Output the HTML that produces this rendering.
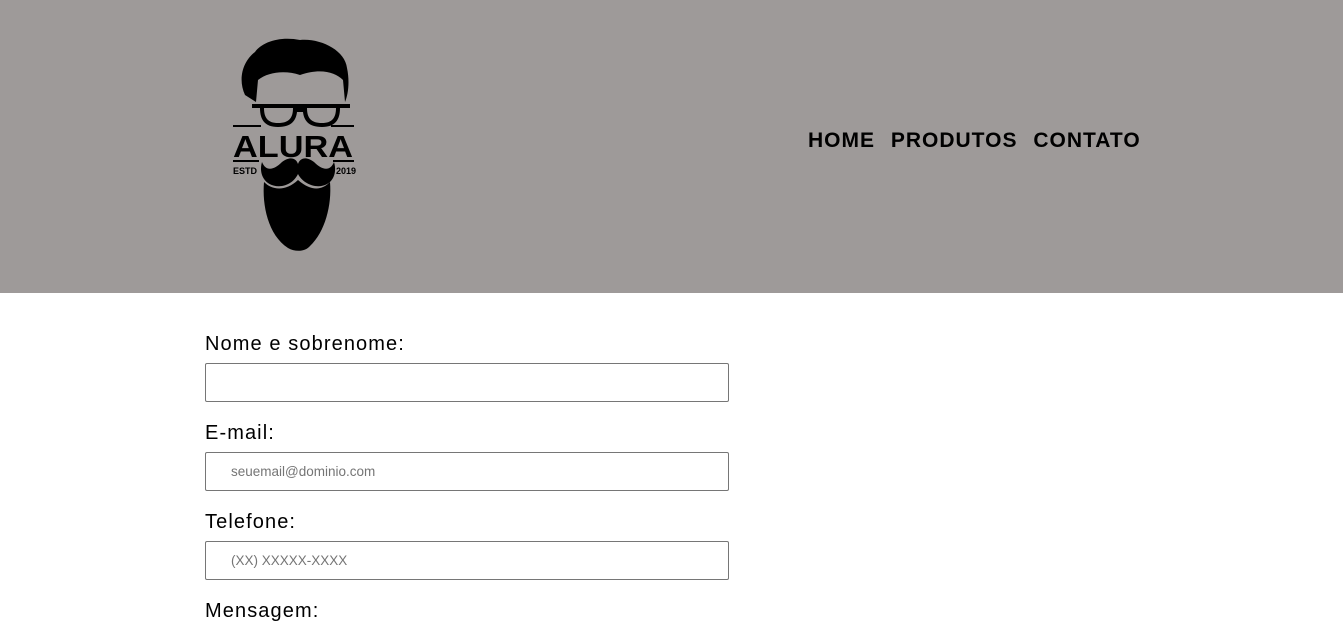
<!DOCTYPE html>
<html><head><style>
body{margin:0;font-family:"Liberation Sans",sans-serif;background:#fff;width:1343px;height:624px;overflow:hidden}
header{position:absolute;left:0;top:0;width:1343px;height:293px;background:#9e9a99}
nav{position:absolute;left:808px;top:129px;font-weight:bold;font-size:21px;letter-spacing:1px;color:#000;white-space:nowrap}
nav span{margin-right:9px}
label{position:absolute;left:205px;font-size:20px;color:#000;letter-spacing:1.1px}
.in{position:absolute;left:205px;width:522px;height:37px;border:1px solid #767676;border-radius:2px;font-size:13.5px;color:#757575;line-height:37px;box-sizing:content-box}
.in span{margin-left:25px}
</style></head><body>
<header>
<svg style="position:absolute;left:230px;top:36px" width="130" height="220" viewBox="230 36 130 220">
<path d="M245 95 C238 80 242 62 255 52 C262 42 280 36 300 40 C320 38 345 50 347 68 C350 82 348 95 345 102 L343 80 C335 72 320 68 300 75 C285 70 268 72 258 80 L256 102 Z" fill="#000"/>
<path d="M252 104 L350 104 L350 108 L340 108 C340 120 335 127 322 127 C308 127 304 120 303 112 L297 112 C296 120 292 127 278 127 C265 127 260 120 260 108 L252 108 Z M264 108 C264 118 268 123 278 123 C289 123 293 118 293 108 Z M307 108 C307 118 311 123 322 123 C332 123 336 118 336 108 Z" fill="#000"/>
<rect x="233" y="125" width="28" height="2" fill="#000"/><rect x="331" y="125" width="23" height="2" fill="#000"/>
<text x="293" y="157" text-anchor="middle" font-family="Liberation Sans" font-weight="bold" font-size="31" textLength="120" lengthAdjust="spacingAndGlyphs">ALURA</text>
<rect x="233" y="160" width="26" height="2" fill="#000"/><rect x="333" y="160" width="21" height="2" fill="#000"/>
<text x="233" y="174" font-family="Liberation Sans" font-size="9" font-weight="bold">ESTD</text>
<text x="336" y="174" font-family="Liberation Sans" font-size="9" font-weight="bold">2019</text>
<path d="M262 162 C258 175 266 188 282 186 C292 184 296 178 298 174 C300 178 305 184 315 186 C331 188 338 175 334 162 C330 172 322 170 314 162 C306 156 300 158 298 164 C296 158 290 156 282 162 C274 170 266 172 262 162 Z" fill="#000"/>
<path d="M264 182 C262 205 268 235 288 248 C295 252 305 252 310 246 C325 232 332 205 330 182 C322 190 312 192 298 180 C285 192 272 190 264 182 Z" fill="#000"/>
</svg>
<nav><span>HOME</span> <span>PRODUTOS</span> <span>CONTATO</span></nav>
</header>
<label style="top:333px">Nome e sobrenome:</label>
<div class="in" style="top:363px"></div>
<label style="top:422px">E-mail:</label>
<div class="in" style="top:452px"><span>seuemail@dominio.com</span></div>
<label style="top:511px">Telefone:</label>
<div class="in" style="top:541px"><span>(XX) XXXXX-XXXX</span></div>
<label style="top:600px">Mensagem:</label>
</body></html>
